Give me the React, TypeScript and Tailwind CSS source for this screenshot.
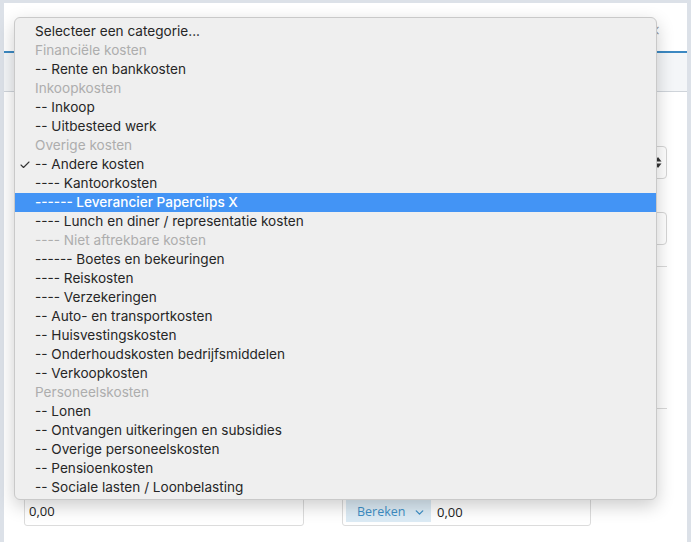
import { Check, ChevronDown } from 'lucide-react'

type Option = { label: string; disabled?: boolean; checked?: boolean; active?: boolean }

const OPTIONS: Option[] = [
  { label: 'Selecteer een categorie...' },
  { label: 'Financiële kosten', disabled: true },
  { label: '-- Rente en bankkosten' },
  { label: 'Inkoopkosten', disabled: true },
  { label: '-- Inkoop' },
  { label: '-- Uitbesteed werk' },
  { label: 'Overige kosten', disabled: true },
  { label: '-- Andere kosten', checked: true },
  { label: '---- Kantoorkosten' },
  { label: '------ Leverancier Paperclips X', active: true },
  { label: '---- Lunch en diner / representatie kosten' },
  { label: '---- Niet aftrekbare kosten', disabled: true },
  { label: '------ Boetes en bekeuringen' },
  { label: '---- Reiskosten' },
  { label: '---- Verzekeringen' },
  { label: '-- Auto- en transportkosten' },
  { label: '-- Huisvestingskosten' },
  { label: '-- Onderhoudskosten bedrijfsmiddelen' },
  { label: '-- Verkoopkosten' },
  { label: 'Personeelskosten', disabled: true },
  { label: '-- Lonen' },
  { label: '-- Ontvangen uitkeringen en subsidies' },
  { label: '-- Overige personeelskosten' },
  { label: '-- Pensioenkosten' },
  { label: '-- Sociale lasten / Loonbelasting' },
]

function SelectArrows() {
  return (
    <svg width="8" height="13" viewBox="0 0 8 13" className="text-[#333]">
      <path d="M4 1 L7.5 5.5 H0.5 Z" fill="currentColor" />
      <path d="M4 12 L7.5 7.5 H0.5 Z" fill="currentColor" />
    </svg>
  )
}

function Dropdown() {
  return (
    <div className="absolute left-[10px] top-[14px] w-[643px] h-[483px] rounded-[6px] border border-[#c9c9c9] bg-[#efefef] pt-[4px] shadow-[0_6px_18px_rgba(0,0,0,0.2)] font-['Inter',sans-serif] text-[13.6px]">
      {OPTIONS.map((o) => (
        <div
          key={o.label}
          className={
            'relative flex h-[19px] items-center pl-[20px] leading-[19px] ' +
            (o.active ? 'bg-[#4394f5] font-medium text-white' : o.disabled ? 'text-[#adadad]' : 'text-[#262626]')
          }
        >
          {o.checked && <Check size={12} strokeWidth={2.2} className="absolute left-[4px] top-[4px] text-[#333]" />}
          <span className="whitespace-pre">{o.label}</span>
        </div>
      ))}
    </div>
  )
}

export default function App() {
  return (
    <div className="h-[542px] w-[691px] overflow-hidden bg-[#dce1e8] pl-[4px] pr-[4px] pt-[3px] font-['Open_Sans',sans-serif]">
      <div className="relative h-full bg-white">
        <div className="flex h-[50px] items-start justify-end border-b-2 border-[#3c89c2] pr-[27px] pt-[18px]">
          <span className="text-[18px] leading-none text-[#9a9a9a]">×</span>
        </div>
        <div className="h-[39px] border-b border-[#cfd4da] bg-[#f4f6f8]" />

        <div className="pl-[20px] pr-[20px]">
          <div className="mt-[54px] flex justify-end">
            <div className="flex h-[33px] w-[420px] items-center justify-end rounded-[4px] border border-[#d6d6d6] pr-[4px]">
              <SelectArrows />
            </div>
          </div>
          <div className="mt-[33px] flex justify-end">
            <div className="h-[33px] w-[420px] rounded-[4px] border border-[#d6d6d6]" />
          </div>
          <div className="mt-[21px] border-t border-[#d9d9d9]" />
          <div className="mt-[141px] border-t border-[#d9d9d9]" />

          <div className="mt-[85px] flex gap-[38px]">
            <div className="flex h-[32px] w-[280px] items-end rounded-[3px] border border-[#dcdcdc] pb-[4px] pl-[4px] text-[13px] text-[#222]">
              0,00
            </div>
            <div className="flex h-[32px] w-[249px] items-stretch rounded-[3px] border border-[#dcdcdc] p-[3px] text-[13px]">
              <div className="flex w-[85px] items-end gap-[8px] bg-[#dcebf5] pb-[0px] pl-[11px] text-[12.5px] text-[#3d8fc6]">
                <span>Bereken</span>
                <ChevronDown size={13} strokeWidth={2.4} className="mb-[3px]" />
              </div>
              <div className="flex items-end pb-[0px] pl-[6px] text-[#222]">0,00</div>
            </div>
          </div>
        </div>

        <Dropdown />
      </div>
    </div>
  )
}
